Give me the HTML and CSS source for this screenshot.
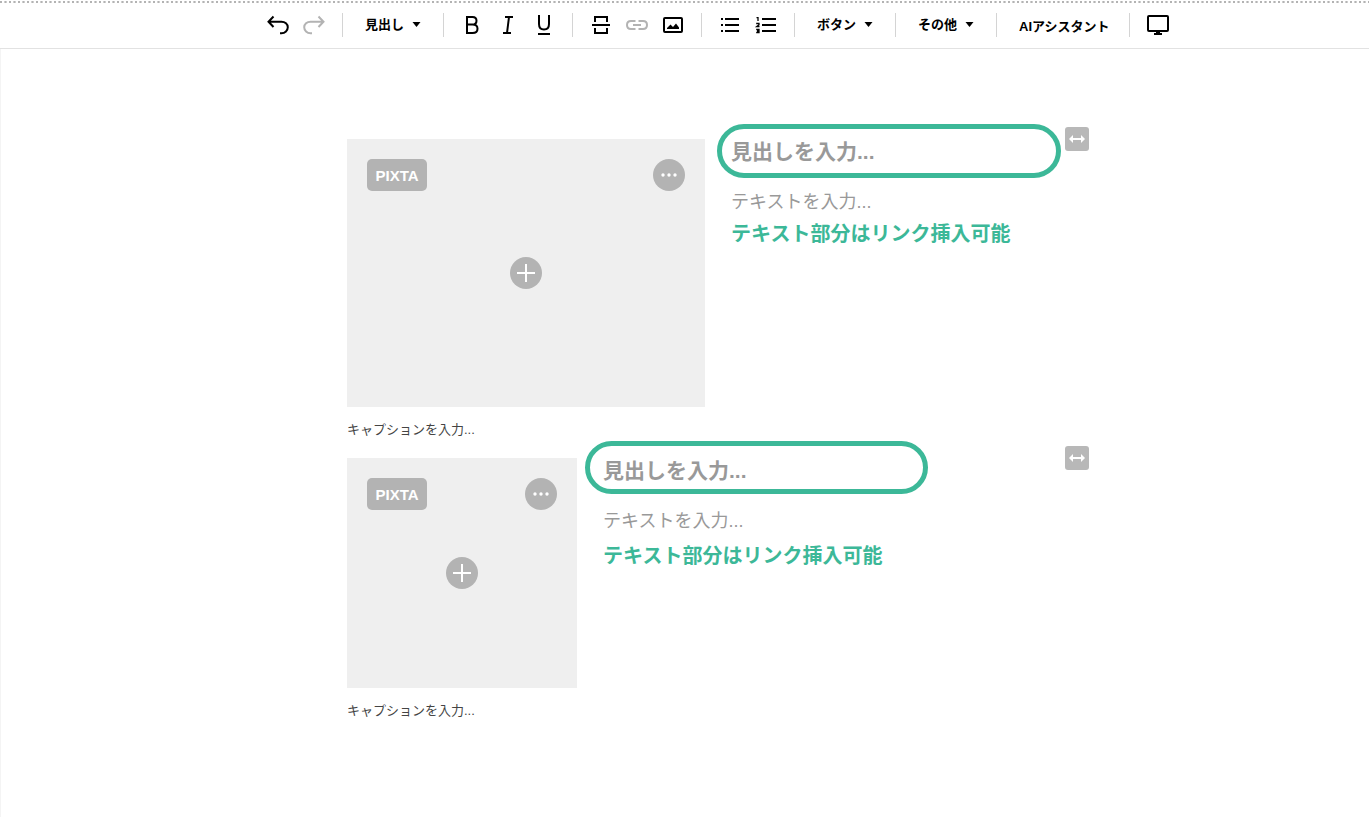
FILE: index.html
```html
<!DOCTYPE html>
<html lang="ja">
<head>
<meta charset="utf-8">
<meta name="viewport" content="width=device-width, initial-scale=1">
<title>エディタ</title>
<link rel="stylesheet" href="styles.css">
</head>
<body>
<header class="toolbar" role="toolbar" aria-label="編集ツール">
  <div class="group">
    <button class="tool" aria-label="元に戻す"><svg viewBox="0 0 24 24"><path d="M7.500 3.500L2.500 8.700L7.500 14M2.500 8.700H15.500C19 8.700 21.800 11.100 21.800 14.300S19 20.300 15.500 20.300H14"/></svg></button>
    <button class="tool muted" aria-label="やり直す"><svg viewBox="0 0 24 24"><path d="M16.500 3.500L21.500 8.700L16.500 14M21.500 8.700H8.500C5 8.700 2.200 11.100 2.200 14.300S5 20.300 8.500 20.300H10"/></svg></button>
  </div>
  <div class="group">
    <label class="drop"><select aria-label="見出し"><option>見出し</option></select><svg viewBox="0 0 8 5"><path d="M0 0H8L4 5Z"/></svg></label>
  </div>
  <div class="group">
    <button class="tool" aria-label="太字"><svg viewBox="0 0 24 24"><path d="M7 4V20M6 4H12.500C15 4 16.500 5.500 16.500 7.700S15 11.500 12.500 11.500H7M12.500 11.500C15.500 11.500 17.500 13.200 17.500 15.700S15.500 20 12.500 20H6"/></svg></button>
    <button class="tool" aria-label="斜体"><svg viewBox="0 0 24 24"><path d="M9 4H17M7 20H15M13 4L11 20"/></svg></button>
    <button class="tool" aria-label="下線"><svg viewBox="0 0 24 24"><path d="M7 2V11C7 14.500 9 16.500 12 16.500S17 14.500 17 11V2M6 21H18"/></svg></button>
  </div>
  <div class="group">
    <button class="tool" aria-label="区切り"><svg viewBox="0 0 24 24"><path d="M3 12H21M6 9V4H18V9M6 15V20H18V15"/></svg></button>
    <button class="tool muted" aria-label="リンク"><svg viewBox="0 0 24 24"><path d="M10.500 8H6C3.500 8 2 9.800 2 12S3.500 16 6 16H10.500M13.500 8H18C20.500 8 22 9.800 22 12S20.500 16 18 16H13.500M8 12H16"/></svg></button>
    <button class="tool" aria-label="画像"><svg viewBox="0 0 24 24"><rect x="3" y="5" width="18" height="14" rx="1"/><path class="solid" d="M6 16V15L9.500 11.500L12 14L15 10.500L18 14.500V16Z"/></svg></button>
  </div>
  <div class="group">
    <button class="tool" aria-label="箇条書き"><svg viewBox="0 0 24 24"><path d="M7 6H21M7 12H21M7 18H21M3 6H5M3 12H5M3 18H5"/></svg></button>
    <button class="tool" aria-label="番号付きリスト"><svg viewBox="0 0 24 24"><path d="M8 6H22M8 12H22M8 18H22"/><path class="thin" d="M2.500 4.700H4V8M2.200 10.500H5V11.700L2.700 13.500H5.500M2.200 16.500H5V19.500H2.200M3 18H5"/></svg></button>
  </div>
  <div class="group">
    <label class="drop"><select aria-label="ボタン"><option>ボタン</option></select><svg viewBox="0 0 8 5"><path d="M0 0H8L4 5Z"/></svg></label>
  </div>
  <div class="group">
    <label class="drop"><select aria-label="その他"><option>その他</option></select><svg viewBox="0 0 8 5"><path d="M0 0H8L4 5Z"/></svg></label>
  </div>
  <div class="group">
    <button class="assist">AIアシスタント</button>
  </div>
  <div class="group">
    <button class="tool" aria-label="プレビュー"><svg viewBox="0 0 24 24"><rect x="2" y="3" width="20" height="15" rx="1"/><path d="M8 21H16"/><path class="solid" d="M10 18H14V21H10Z"/></svg></button>
  </div>
</header>

<main class="canvas">
  <div class="content">
    <section class="block wide">
      <figure class="media">
        <div class="frame">
          <button class="pixta">PIXTA</button>
          <button class="round more" aria-label="メニュー"><svg viewBox="0 0 32 32"><circle cx="10" cy="16" r="1.700"/><circle cx="16" cy="16" r="1.700"/><circle cx="22" cy="16" r="1.700"/></svg></button>
          <button class="round add" aria-label="画像を追加"><svg viewBox="0 0 32 32"><path d="M7 16H25M16 7V25"/></svg></button>
        </div>
        <input class="caption" aria-label="キャプション" placeholder="キャプションを入力...">
      </figure>
      <div class="copy">
        <input class="title" aria-label="見出し" placeholder="見出しを入力...">
        <input class="text" aria-label="テキスト" placeholder="テキストを入力...">
        <p class="note">テキスト部分はリンク挿入可能</p>
        <span class="ring"></span>
      </div>
      <button class="resize" aria-label="幅を変更"><svg viewBox="0 0 24 24"><path d="M6 12H18"/><path class="solid" d="M4 12L8 8V16ZM20 12L16 8V16Z"/></svg></button>
    </section>

    <section class="block narrow">
      <figure class="media">
        <div class="frame">
          <button class="pixta">PIXTA</button>
          <button class="round more" aria-label="メニュー"><svg viewBox="0 0 32 32"><circle cx="10" cy="16" r="1.700"/><circle cx="16" cy="16" r="1.700"/><circle cx="22" cy="16" r="1.700"/></svg></button>
          <button class="round add" aria-label="画像を追加"><svg viewBox="0 0 32 32"><path d="M7 16H25M16 7V25"/></svg></button>
        </div>
        <input class="caption" aria-label="キャプション" placeholder="キャプションを入力...">
      </figure>
      <div class="copy">
        <input class="title" aria-label="見出し" placeholder="見出しを入力...">
        <input class="text" aria-label="テキスト" placeholder="テキストを入力...">
        <p class="note">テキスト部分はリンク挿入可能</p>
        <span class="ring"></span>
      </div>
      <button class="resize" aria-label="幅を変更"><svg viewBox="0 0 24 24"><path d="M6 12H18"/><path class="solid" d="M4 12L8 8V16ZM20 12L16 8V16Z"/></svg></button>
    </section>
  </div>
</main>
</body>
</html>
```
FILE: styles.css
```css
* { box-sizing: border-box; }

body {
  margin: 0;
  min-height: 100vh;
  display: flex;
  flex-direction: column;
  background: #fff;
  color: #000;
  font-family: "Liberation Sans", "Noto Sans CJK JP", sans-serif;
}

button, input, select {
  margin: 0;
  padding: 0;
  border: 0;
  background: none;
  color: inherit;
  font: inherit;
}

svg {
  display: block;
  fill: none;
  stroke: currentColor;
  stroke-width: 2;
}

.solid { fill: currentColor; stroke: none; }
.thin { stroke-width: 1.3; }

/* Toolbar */
.toolbar {
  position: relative;
  display: flex;
  justify-content: center;
  align-items: center;
  height: 49px;
  padding: 1px 0 0 67px;
  border-bottom: 1px solid #e2e2e2;
}

.toolbar::before {
  content: "";
  position: absolute;
  top: 1px;
  left: 0;
  right: 0;
  height: 2px;
  background: repeating-linear-gradient(90deg, #b3b3b3 0 2px, #fff 2px 4px, #d0d0d0 4px 5px, #b3b3b3 5px 6px, #d0d0d0 6px 7px, #fff 7px 9px);
}

.group {
  display: flex;
  align-items: center;
  gap: 12px;
  height: 24px;
  padding: 0 16px;
}

.group + .group { border-left: 1px solid #d4d4d4; }

.tool { width: 24px; height: 24px; }
.tool svg { width: 24px; height: 24px; }
.muted { color: #b3b3b3; }

.drop, .assist {
  margin: 0 6px;
  font-size: 13px;
  font-weight: 700;
}

.drop {
  position: relative;
  font-family: "Noto Sans CJK JP", sans-serif;
}

.drop select {
  display: block;
  appearance: none;
  width: 56px;
  height: 24px;
  padding-bottom: 3px;
}

.drop svg {
  position: absolute;
  top: 9px;
  right: 0;
  width: 9px;
  height: 5px;
  fill: currentColor;
  stroke: none;
  pointer-events: none;
}

.assist {
  width: 88px;
  padding-top: 1px;
  white-space: nowrap;
}

/* Canvas */
.canvas {
  flex: 1;
  padding: 90px 16px 0;
  border-left: 1px solid #f4f4f4;
}

.content {
  display: flex;
  flex-direction: column;
  gap: 19px;
  max-width: 676px;
  margin: 0 auto;
}

.block {
  position: relative;
  display: flex;
  gap: 26px;
}

.media {
  flex: none;
  margin: 0;
}

.wide .media { width: 358px; }
.narrow .media { width: 230px; }

.frame {
  display: grid;
  grid-template: auto 1fr / auto auto;
  justify-content: space-between;
  position: relative;
  padding: 20px;
  background: #efefef;
}

.wide .frame { height: 268px; }
.narrow .frame { height: 230px; }

.pixta {
  width: 60px;
  height: 32px;
  border-radius: 5px;
  background: #b3b3b3;
  color: #fff;
  font-size: 15px;
  font-weight: 700;
}

.round {
  width: 32px;
  height: 32px;
  border-radius: 50%;
  background: #b3b3b3;
  color: #fff;
}

.more svg { fill: currentColor; stroke: none; }

.add {
  position: absolute;
  inset: 0;
  margin: auto;
}

.caption {
  display: block;
  width: 100%;
  height: 19px;
  margin-top: 13px;
  font-size: 13px;
}

.caption::placeholder { color: #444; opacity: 1; }

.copy {
  position: relative;
  flex: 1;
  min-width: 0;
}

.title, .text {
  display: block;
  width: 100%;
}

.title {
  height: 26px;
  font-size: 21px;
  font-weight: 700;
}

.text {
  height: 26px;
  margin-top: 24px;
  font-size: 18px;
}

.title::placeholder, .text::placeholder { color: #999; opacity: 1; }

.note {
  margin: 5px 0 0;
  color: #3cb898;
  font-size: 20px;
  font-weight: 700;
  line-height: 28px;
  white-space: nowrap;
}

.narrow .note { margin-top: 8px; }

/* Callout drawn over the heading field */
.ring {
  position: absolute;
  top: -15px;
  left: -14px;
  width: 344px;
  height: 54px;
  border: 5px solid #3cb898;
  border-radius: 27px;
  pointer-events: none;
}

.narrow .ring {
  top: -17px;
  left: -18px;
  width: 343px;
  height: 53px;
}

.resize {
  position: absolute;
  top: -12px;
  right: -66px;
  width: 24px;
  height: 24px;
  border-radius: 3px;
  background: #b8b8b8;
  color: #fff;
}
```
